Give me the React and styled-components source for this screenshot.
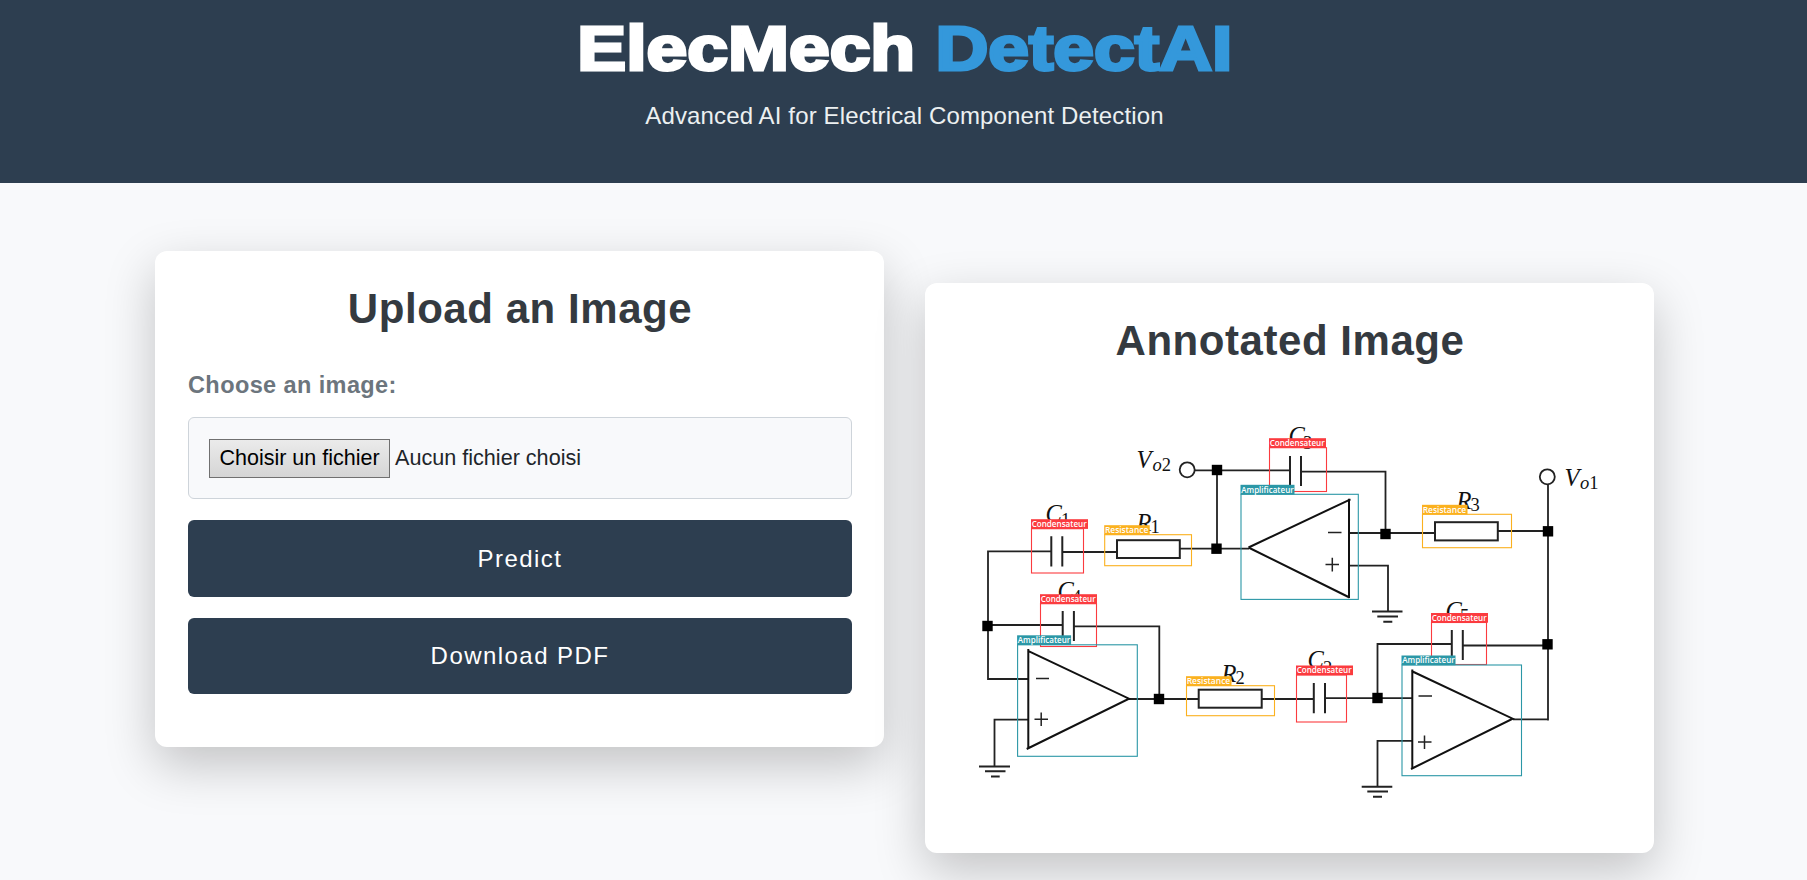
import React from "react";
import styled, { createGlobalStyle } from "styled-components";

const GlobalStyle = createGlobalStyle`
  html, body { margin: 0; height: 880px; overflow: hidden; }
  body {
    background: #f8f9fb;
    font-family: "Liberation Sans", Arial, sans-serif;
    color: #343a40;
  }
  * { box-sizing: border-box; }
`;

const Header = styled.header`
  display: flex;
  flex-direction: column;
  align-items: center;
  height: 183px;
  padding: 11px 0 0 2px;
  background: #2d3e50;
  text-align: center;
`;

const Title = styled.h1`
  margin: 0;
  font-size: 63px;
  line-height: 74px;
  font-weight: 700;
  color: #fff;
  -webkit-text-stroke: 3.1px currentColor;
  transform: scaleX(1.162);
`;

const Accent = styled.span`
  color: #3498db;
`;

const Tagline = styled.p`
  margin: 17px 0 0;
  font-size: 24px;
  line-height: 28px;
  letter-spacing: 0.13px;
  color: #ecf0f1;
`;

const Main = styled.main`
  display: flex;
  align-items: flex-start;
  gap: 41px;
  padding: 68px 0 0 155px;
`;

const Card = styled.section`
  width: 729px;
  height: ${(p) => p.$height}px;
  margin-top: ${(p) => p.$offset || 0}px;
  padding: 34px 32px 0 33px;
  border-radius: 12px;
  background: #fff;
  box-shadow: 0 18px 50px rgba(0, 0, 0, 0.22);
`;

const CardTitle = styled.h2`
  margin: 0;
  font-size: 42px;
  line-height: 48px;
  font-weight: 700;
  letter-spacing: 0.55px;
  text-align: center;
  color: #343a40;
`;

const Label = styled.label`
  display: block;
  margin: 38px 0 18px;
  font-size: 23.5px;
  line-height: 28px;
  font-weight: 700;
  letter-spacing: 0.4px;
  color: #6c757d;
`;

const FileField = styled.div`
  display: flex;
  align-items: center;
  gap: 5px;
  height: 82px;
  padding: 0 20px;
  border: 1px solid #ced4da;
  border-radius: 6px;
  background: #f8f9fb;
  font-size: 21.6px;
  color: #212529;
`;

const FileButton = styled.button`
  width: 181px;
  height: 39px;
  padding: 0;
  border: 1px solid #707070;
  border-radius: 0;
  background: linear-gradient(#ebebeb, #d5d5d5);
  font: 21.5px "Liberation Sans", Arial, sans-serif;
  white-space: nowrap;
  color: #000;
`;

const FileName = styled.span`
  padding-bottom: 1px;
`;

const Actions = styled.div`
  display: flex;
  flex-direction: column;
  gap: 21px;
  margin-top: 21px;
`;

const ActionButton = styled.button`
  height: ${(p) => p.$height}px;
  padding: 0;
  border: 0;
  border-radius: 6px;
  background: #2d3e50;
  font: 24px "Liberation Sans", Arial, sans-serif;
  letter-spacing: 1.45px;
  color: #fff;
`;

const Diagram = styled.svg`
  display: block;
  margin-top: 25px;
`;

const Symbol = styled.text`
  font: italic 24.5px "Liberation Serif", serif;
  fill: #111;
`;

const Subscript = styled.tspan`
  font-size: 18.5px;
  font-style: ${(p) => (p.$italic ? "italic" : "normal")};
`;

const TagText = styled.text`
  font: 600 8.6px "Open Sans", sans-serif;
  fill: #fff;
`;

const KINDS = {
  c: { color: "#fb3b3f", label: "Condensateur", width: 57, text: 55 },
  r: { color: "#fbb11f", label: "Resistance", width: 45.5, text: 43.5 },
  a: { color: "#2b97a6", label: "Amplificateur", width: 54, text: 52.5 },
};

function Detection({ kind, x, y, right, bottom }) {
  const k = KINDS[kind];
  return (
    <g>
      <rect x={x} y={y} width={right - x} height={bottom - y} fill="none" stroke={k.color} strokeWidth="1.1" />
      <rect x={x - 0.5} y={y - 9.5} width={k.width} height="9.7" fill={k.color} />
      <TagText x={x + 0.2} y={y - 1.8} textLength={k.text} lengthAdjust="spacingAndGlyphs">{k.label}</TagText>
    </g>
  );
}

const DETECTIONS = [
  ["c", 1269.5, 447.7, 1326.5, 491.5],
  ["c", 1031.5, 528.7, 1083.5, 573],
  ["c", 1040.5, 603.7, 1096.5, 646.5],
  ["c", 1431.5, 622.5, 1486.5, 664.5],
  ["c", 1296.5, 675, 1346.5, 722],
  ["r", 1104.7, 534.7, 1191.5, 565.7],
  ["r", 1422.5, 514.3, 1511.5, 547.7],
  ["r", 1186.5, 685.7, 1274.5, 715.7],
  ["a", 1241, 494.3, 1358.3, 599.4],
  ["a", 1017.6, 644.8, 1137.3, 756.3],
  ["a", 1402, 665, 1521.5, 775.7],
];

const NODES = [
  [1217, 470], [1216.5, 548.7], [1385.5, 534], [1548, 531.3], [1547.5, 644.3],
  [987.5, 626], [1159, 699], [1377.5, 698],
];

const SYMBOLS = [
  ["V", 1136.5, 468, "o2", 1152.5, 471],
  ["V", 1564.5, 485.5, "o1", 1580, 488.5],
  ["C", 1045.5, 521.5, "1", 1061, 526],
  ["C", 1288.5, 443.5, "3", 1303, 448.5],
  ["C", 1057.5, 599, "4", 1072, 603],
  ["C", 1445.5, 618.5, "5", 1460, 621.5],
  ["C", 1307.5, 668, "2", 1323, 674],
  ["R", 1136.5, 530.5, "1", 1150.5, 533],
  ["R", 1456.5, 508.5, "3", 1470.5, 511],
  ["R", 1221.5, 681.5, "2", 1235.5, 684],
];

const WIRES = `
M1195 470.3H1290 M1217 470V548 M1301 471.7H1385.5V533 M1349 533H1434.5 M1349 565.7H1388V611
M1498 531H1548 M1548 484.5V720.5 M1513 719.3H1548
M1051 551.3H988V679H1028 M1062.5 552H1117 M1180 548.6H1249
M988 625H1063 M1074 626.3H1159.3V699 M1129 699H1198.5 M1028 719.7H994.5V766
M1262 699H1313.5 M1325 698.2H1412 M1377.5 698V644H1451.5 M1463 645.5H1548 M1412 740.8H1377.5V786`;

const PLATES = `
M1290 456V486 M1301 456V486 M1051.3 536.3V566.5 M1062.3 536.3V566.5
M1062.7 611V641 M1073.9 611V641 M1451.8 630V660 M1462.8 630V660
M1313.8 683V713.3 M1325 683V713.3`;

const GROUNDS = `
M1372 611.6H1402.5 M1377.3 616.5H1398 M1383.3 621.8H1392.3
M979 766.4H1010 M985 771.2H1005.5 M991 776.6H999.7
M1361.7 786.7H1392.3 M1367.3 791.5H1388 M1373 796.8H1382`;

const SIGNS = `
M1328 532.5H1341.5 M1325.5 564.6H1339 M1332.3 557.7V571.5
M1036 678.5H1049 M1034.5 719.3H1048 M1041.2 712.5V726
M1418.5 696H1432 M1418 742H1431.5 M1424.5 735.5V749`;

function Circuit() {
  return (
    <Diagram width="664" height="430" viewBox="958 390 664 430">
      <g fill="none" stroke="#222" strokeWidth="1.8">
        <path d={WIRES} />
        <path d={PLATES} strokeWidth="2" />
        <path d={GROUNDS} strokeWidth="2" />
        <path d={SIGNS} strokeWidth="1.5" />
        <path d="M1248.5 547.5L1350.5 499.3M1349 498.7V598M1248.5 547.5L1349.5 597.5" stroke="#111" strokeWidth="2" />
        <path d="M1028.3 649V749M1027.5 650.7L1129 698.7L1026.7 749" stroke="#111" strokeWidth="2" />
        <path d="M1412.3 669.5V769M1411.5 671L1512.7 718.7L1411 769" stroke="#111" strokeWidth="2" />
        <circle cx="1187.2" cy="469.8" r="7.5" />
        <circle cx="1547.3" cy="476.8" r="7.5" />
        <rect x="1117" y="540.2" width="62.8" height="17.8" fill="#fff" strokeWidth="2" />
        <rect x="1435" y="522.2" width="62.8" height="18.2" fill="#fff" strokeWidth="2" />
        <rect x="1198.7" y="689.7" width="63" height="18" fill="#fff" strokeWidth="2" />
      </g>
      {NODES.map(([x, y]) => (
        <rect key={`${x}-${y}`} x={x - 5.2} y={y - 5.2} width="10.4" height="10.4" fill="#000" />
      ))}
      {SYMBOLS.map(([name, x, y, sub, sx, sy]) => (
        <Symbol key={name + sub} x={x} y={y}>
          {name}
          {sub.length > 1 ? (
            <>
              <Subscript $italic x={sx} y={sy}>{sub[0]}</Subscript>
              <Subscript>{sub[1]}</Subscript>
            </>
          ) : (
            <Subscript x={sx} y={sy}>{sub}</Subscript>
          )}
        </Symbol>
      ))}
      {DETECTIONS.map(([kind, x, y, right, bottom]) => (
        <Detection key={`${x}-${y}`} kind={kind} x={x} y={y} right={right} bottom={bottom} />
      ))}
    </Diagram>
  );
}

export default function App() {
  return (
    <>
      <GlobalStyle />
      <Header>
        <Title>ElecMech <Accent>DetectAI</Accent></Title>
        <Tagline>Advanced AI for Electrical Component Detection</Tagline>
      </Header>
      <Main>
        <Card $height={496}>
          <CardTitle>Upload an Image</CardTitle>
          <Label>Choose an image:</Label>
          <FileField>
            <FileButton type="button">Choisir un fichier</FileButton>
            <FileName>Aucun fichier choisi</FileName>
          </FileField>
          <Actions>
            <ActionButton $height={77}>Predict</ActionButton>
            <ActionButton $height={76}>Download PDF</ActionButton>
          </Actions>
        </Card>
        <Card $height={570} $offset={32}>
          <CardTitle>Annotated Image</CardTitle>
          <Circuit />
        </Card>
      </Main>
    </>
  );
}
